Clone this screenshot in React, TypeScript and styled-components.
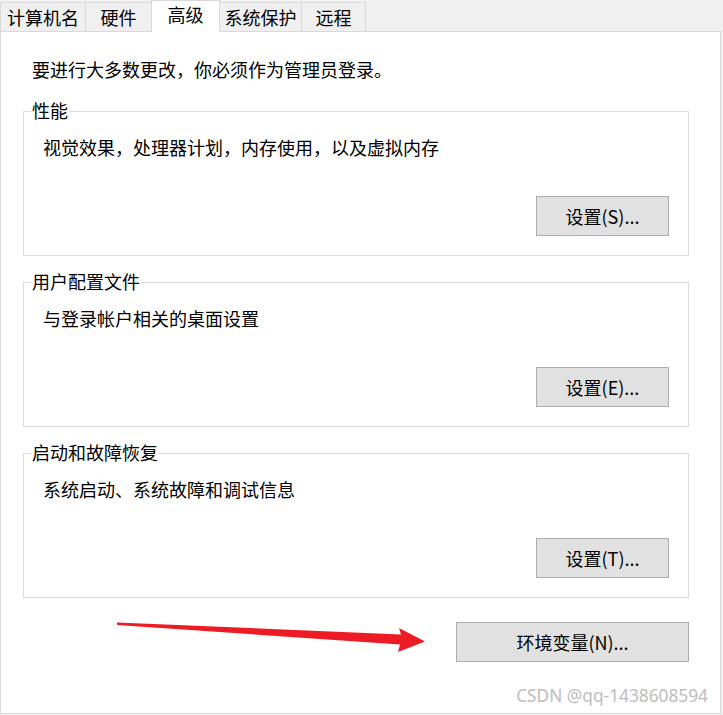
import React from "react";
import styled, { createGlobalStyle } from "styled-components";

const GlobalStyle = createGlobalStyle`
  html, body {
    margin: 0;
    padding: 0;
    background: #f0f0f0;
  }
  body {
    font-family: "Noto Sans CJK SC", "Noto Sans", sans-serif;
    color: #000;
  }
`;

const Window = styled.div`
  position: relative;
  width: 723px;
  height: 715px;
  background: #f0f0f0;
  overflow: hidden;
`;

const TabStrip = styled.div`
  display: flex;
  align-items: flex-end;
  height: 31px;
`;

const Tab = styled.div<{ $w: number; $active?: boolean }>`
  position: relative;
  z-index: ${(p) => (p.$active ? 1 : 0)};
  box-sizing: border-box;
  width: ${(p) => p.$w}px;
  height: ${(p) => (p.$active ? 32 : 29)}px;
  margin-bottom: ${(p) => (p.$active ? -1 : 0)}px;
  margin-left: -1px;
  &:first-child {
    margin-left: 0;
  }
  border: 1px solid #d9d9d9;
  border-bottom: none;
  background: ${(p) => (p.$active ? "#ffffff" : "#f0f0f0")};
  display: flex;
  justify-content: center;
  align-items: flex-start;
  padding-top: ${(p) => (p.$active ? 1 : 2)}px;
  font-size: 18px;
  line-height: 24px;
  white-space: nowrap;
`;

const Panel = styled.div`
  box-sizing: border-box;
  width: 721px;
  height: 683px;
  border: 1px solid #d9d9d9;
  background: #ffffff;
  padding: 25px 0 0 22px;
  display: flex;
  flex-direction: column;
`;

const Intro = styled.div`
  font-size: 18px;
  line-height: 24px;
  padding-left: 9px;
`;

const Column = styled.div`
  width: 666px;
  display: flex;
  flex-direction: column;
`;

const GroupStack = styled(Column)`
  gap: 26px;
  margin-top: 30px;
`;

const Group = styled.div`
  position: relative;
  box-sizing: border-box;
  height: 145px;
  border: 1px solid #dcdcdc;
  padding: 23px 19px 19px 19px;
  display: flex;
  flex-direction: column;
`;

const Caption = styled.span`
  position: absolute;
  top: -14px;
  left: 7px;
  padding: 0 1px;
  background: #ffffff;
  font-size: 18px;
  line-height: 24px;
`;

const Desc = styled.div`
  font-size: 18px;
  line-height: 24px;
`;

const Button = styled.button<{ $w: number }>`
  box-sizing: border-box;
  width: ${(p) => p.$w}px;
  height: 40px;
  padding: 0;
  margin: 0;
  background: #e1e1e1;
  border: 1px solid #adadad;
  border-radius: 0;
  color: #000;
  font-family: "Noto Sans CJK SC", "Noto Sans", sans-serif;
  font-size: 18px;
  line-height: 24px;
`;

const GroupButton = styled(Button)`
  margin-top: auto;
  align-self: flex-end;
`;

const ActionRow = styled(Column)`
  margin-top: 24px;
  align-items: flex-end;
`;

const Watermark = styled.div`
  position: absolute;
  right: 15px;
  bottom: 8px;
  font-family: "Noto Sans", "Noto Sans CJK SC", sans-serif;
  font-size: 17.3px;
  line-height: 22px;
  color: #bdbdbd;
  white-space: nowrap;
`;

const ArrowLayer = styled.svg`
  position: absolute;
  left: 0;
  top: 0;
  pointer-events: none;
`;

const tabs = [
  { label: "计算机名", w: 86 },
  { label: "硬件", w: 67 },
  { label: "高级", w: 69, active: true },
  { label: "系统保护", w: 83 },
  { label: "远程", w: 65 },
];

const groups = [
  { title: "性能", desc: "视觉效果，处理器计划，内存使用，以及虚拟内存", btn: "设置(S)..." },
  { title: "用户配置文件", desc: "与登录帐户相关的桌面设置", btn: "设置(E)..." },
  { title: "启动和故障恢复", desc: "系统启动、系统故障和调试信息", btn: "设置(T)..." },
];

export default function App() {
  return (
    <>
      <GlobalStyle />
      <Window>
        <TabStrip>
          {tabs.map((t) => (
            <Tab key={t.label} $w={t.w} $active={t.active}>
              {t.label}
            </Tab>
          ))}
        </TabStrip>
        <Panel>
          <Intro>要进行大多数更改，你必须作为管理员登录。</Intro>
          <GroupStack>
            {groups.map((g) => (
              <Group key={g.title}>
                <Caption>{g.title}</Caption>
                <Desc>{g.desc}</Desc>
                <GroupButton $w={133}>{g.btn}</GroupButton>
              </Group>
            ))}
          </GroupStack>
          <ActionRow>
            <Button $w={233}>环境变量(N)...</Button>
          </ActionRow>
        </Panel>
        <Watermark>CSDN @qq-1438608594</Watermark>
        <ArrowLayer width={723} height={715} viewBox="0 0 723 715">
          <polygon
            points="117,622.5 401,634.5 399,628 425,641.5 398,652 400,644.5 117,625"
            fill="#ed1c24"
          />
        </ArrowLayer>
      </Window>
    </>
  );
}
